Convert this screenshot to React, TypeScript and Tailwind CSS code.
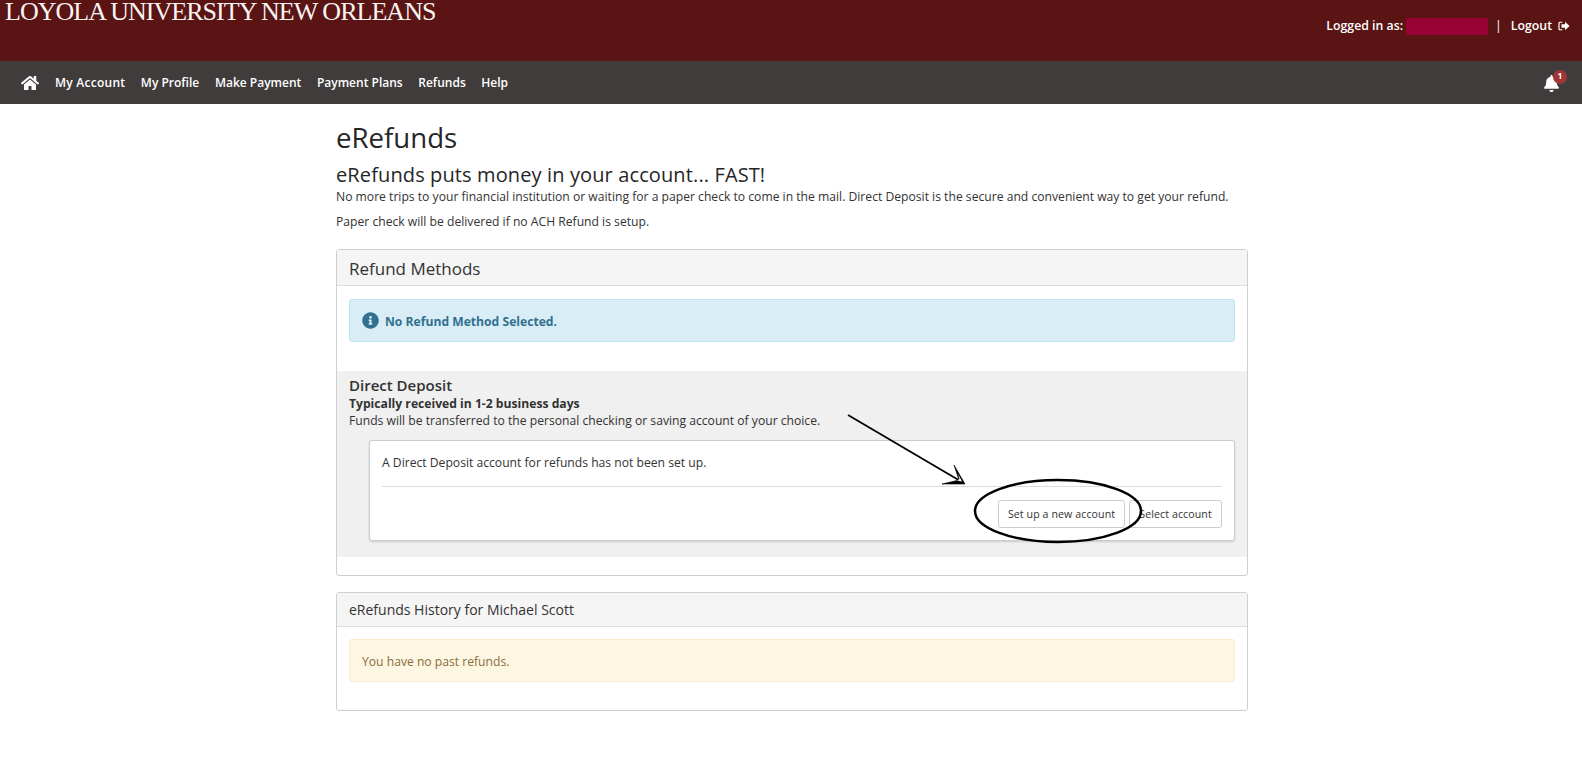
import React from "react";
import { FaHome, FaBell, FaInfoCircle } from "react-icons/fa";

function App() {
  return (
    <div className="relative min-h-[782px] bg-white font-['Open_Sans',sans-serif] text-[12.15px] text-[#333]">
      <header className="flex h-[61px] items-start justify-between bg-[#5a1414] text-white">
        <div className="pl-[5px] font-['Liberation_Serif',serif] text-[26px] leading-[24px] tracking-[-0.97px] text-[#f8f4f2]">
          LOYOLA UNIVERSITY NEW ORLEANS
        </div>
        <div className="mr-[12px] flex h-[52px] items-center text-[12.3px] font-semibold">
          <span>Logged in as:</span>
          <span className="ml-[3px] h-[17px] w-[82px] bg-[#990033]" />
          <span className="ml-[7px] font-normal">|</span>
          <span className="ml-[9px]">Logout</span>
          <svg viewBox="0 0 14 12" className="ml-[6px] h-[10px] w-[12px]" fill="currentColor">
            <path d="M5 0.8H2.2C1 0.8 0.3 1.6 0.3 2.8V9.2C0.3 10.4 1 11.2 2.2 11.2H5V9.8H2.4C2 9.8 1.7 9.5 1.7 9V3C1.7 2.5 2 2.2 2.4 2.2H5Z" />
            <path d="M8.2 1L13.6 6L8.2 11V8H4V4H8.2Z" />
          </svg>
        </div>
      </header>

      <nav className="flex h-[43px] items-center justify-between bg-[#403c3c] text-white">
        <div className="flex items-center pl-[21px] text-[12px] font-semibold">
          <FaHome className="mr-[16px] h-[16px] w-[18px]" />
          <div className="mt-[1px] flex gap-[15.6px]">
            <span className="tracking-[0.25px]">My Account</span>
            <span>My Profile</span>
            <span>Make Payment</span>
            <span>Payment Plans</span>
            <span>Refunds</span>
            <span>Help</span>
          </div>
        </div>
        <div className="relative mr-[23px] mt-[1px]">
          <FaBell className="h-[17px] w-[15px]" />
          <span className="absolute -right-[8px] -top-[5px] flex h-[14px] w-[14px] items-center justify-center rounded-full bg-[#a23636] text-[8.5px] font-bold leading-none">
            1
          </span>
        </div>
      </nav>

      <main className="mx-auto w-[914px] pl-[2px]">
        <h1 className="mt-[15px] text-[27.6px] font-medium leading-[36px] text-[#262626]">eRefunds</h1>
        <h2 className="mt-[8px] text-[20px] font-medium leading-[24px] tracking-[0.12px] text-[#262626]">eRefunds puts money in your account... FAST!</h2>
        <p className="mt-[1px] leading-[17px]">
          No more trips to your financial institution or waiting for a paper check to come in the mail. Direct Deposit is the secure and convenient way to get your refund.
        </p>
        <p className="mt-[8px] leading-[17px]">Paper check will be delivered if no ACH Refund is setup.</p>

        <section className="mt-[19px] h-[327px] rounded-[3px] border border-[#cfcfcf]">
          <div className="flex h-[36px] items-center border-b border-[#ddd] bg-[#f5f5f5] px-[12px] pt-[2px] text-[17px] font-medium">
            Refund Methods
          </div>
          <div className="mx-[12px] mt-[13px] flex h-[43px] items-center rounded-[3px] border border-[#bce8f1] bg-[#d9edf7] pl-[12px] font-bold text-[#31708f]">
            <FaInfoCircle className="mr-[6px] -mt-[1px] h-[17px] w-[17px]" />
            <span className="mt-[3px]">No Refund Method Selected.</span>
          </div>
          <div className="mt-[29px] h-[186px] bg-[#f0f0f0] px-[12px] pt-[4px]">
            <div className="text-[15px] font-semibold leading-[20px]">Direct Deposit</div>
            <div className="font-bold leading-[17px]">Typically received in 1-2 business days</div>
            <div className="leading-[17px]">Funds will be transferred to the personal checking or saving account of your choice.</div>
            <div className="ml-[20px] mt-[11px] h-[101px] rounded-[3px] border border-[#ccc] bg-white px-[12px] shadow-[0_1px_2px_rgba(0,0,0,0.15)]">
              <div className="flex h-[46px] items-center border-b border-[#ddd]">A Direct Deposit account for refunds has not been set up.</div>
              <div className="mt-[13px] flex justify-end gap-[4px] text-[10.6px] tracking-[0.1px]">
                <button className="h-[28px] w-[127px] rounded-[3px] border border-[#ccc] bg-white pt-px">Set up a new account</button>
                <button className="h-[28px] w-[93px] rounded-[3px] border border-[#ccc] bg-white pt-px">Select account</button>
              </div>
            </div>
          </div>
        </section>

        <section className="mt-[16px] h-[119px] rounded-[3px] border border-[#cfcfcf]">
          <div className="flex h-[34px] items-center border-b border-[#ddd] bg-[#f5f5f5] px-[12px] text-[14px] font-medium">
            eRefunds History for Michael Scott
          </div>
          <div className="mx-[12px] mt-[12px] flex h-[43px] items-center rounded-[3px] border border-[#faebcc] bg-[#fdf6e3] pl-[12px] pt-[3px] text-[#8a6d3b]">
            You have no past refunds.
          </div>
        </section>
      </main>

      <svg className="pointer-events-none absolute left-0 top-0" width="1582" height="782" fill="none">
        <ellipse cx="1058" cy="511" rx="83" ry="31" stroke="#000" strokeWidth="2.5" />
        <path d="M848 415L962 482" stroke="#000" strokeWidth="1.8" />
        <path d="M954 465L965 484L942 484L959 480Z" fill="#000" stroke="#000" strokeWidth="0.6" />
        <path d="M958 474L962 481.5L957 480.5L959.5 479Z" fill="#fff" />
      </svg>
    </div>
  );
}

export default App;
